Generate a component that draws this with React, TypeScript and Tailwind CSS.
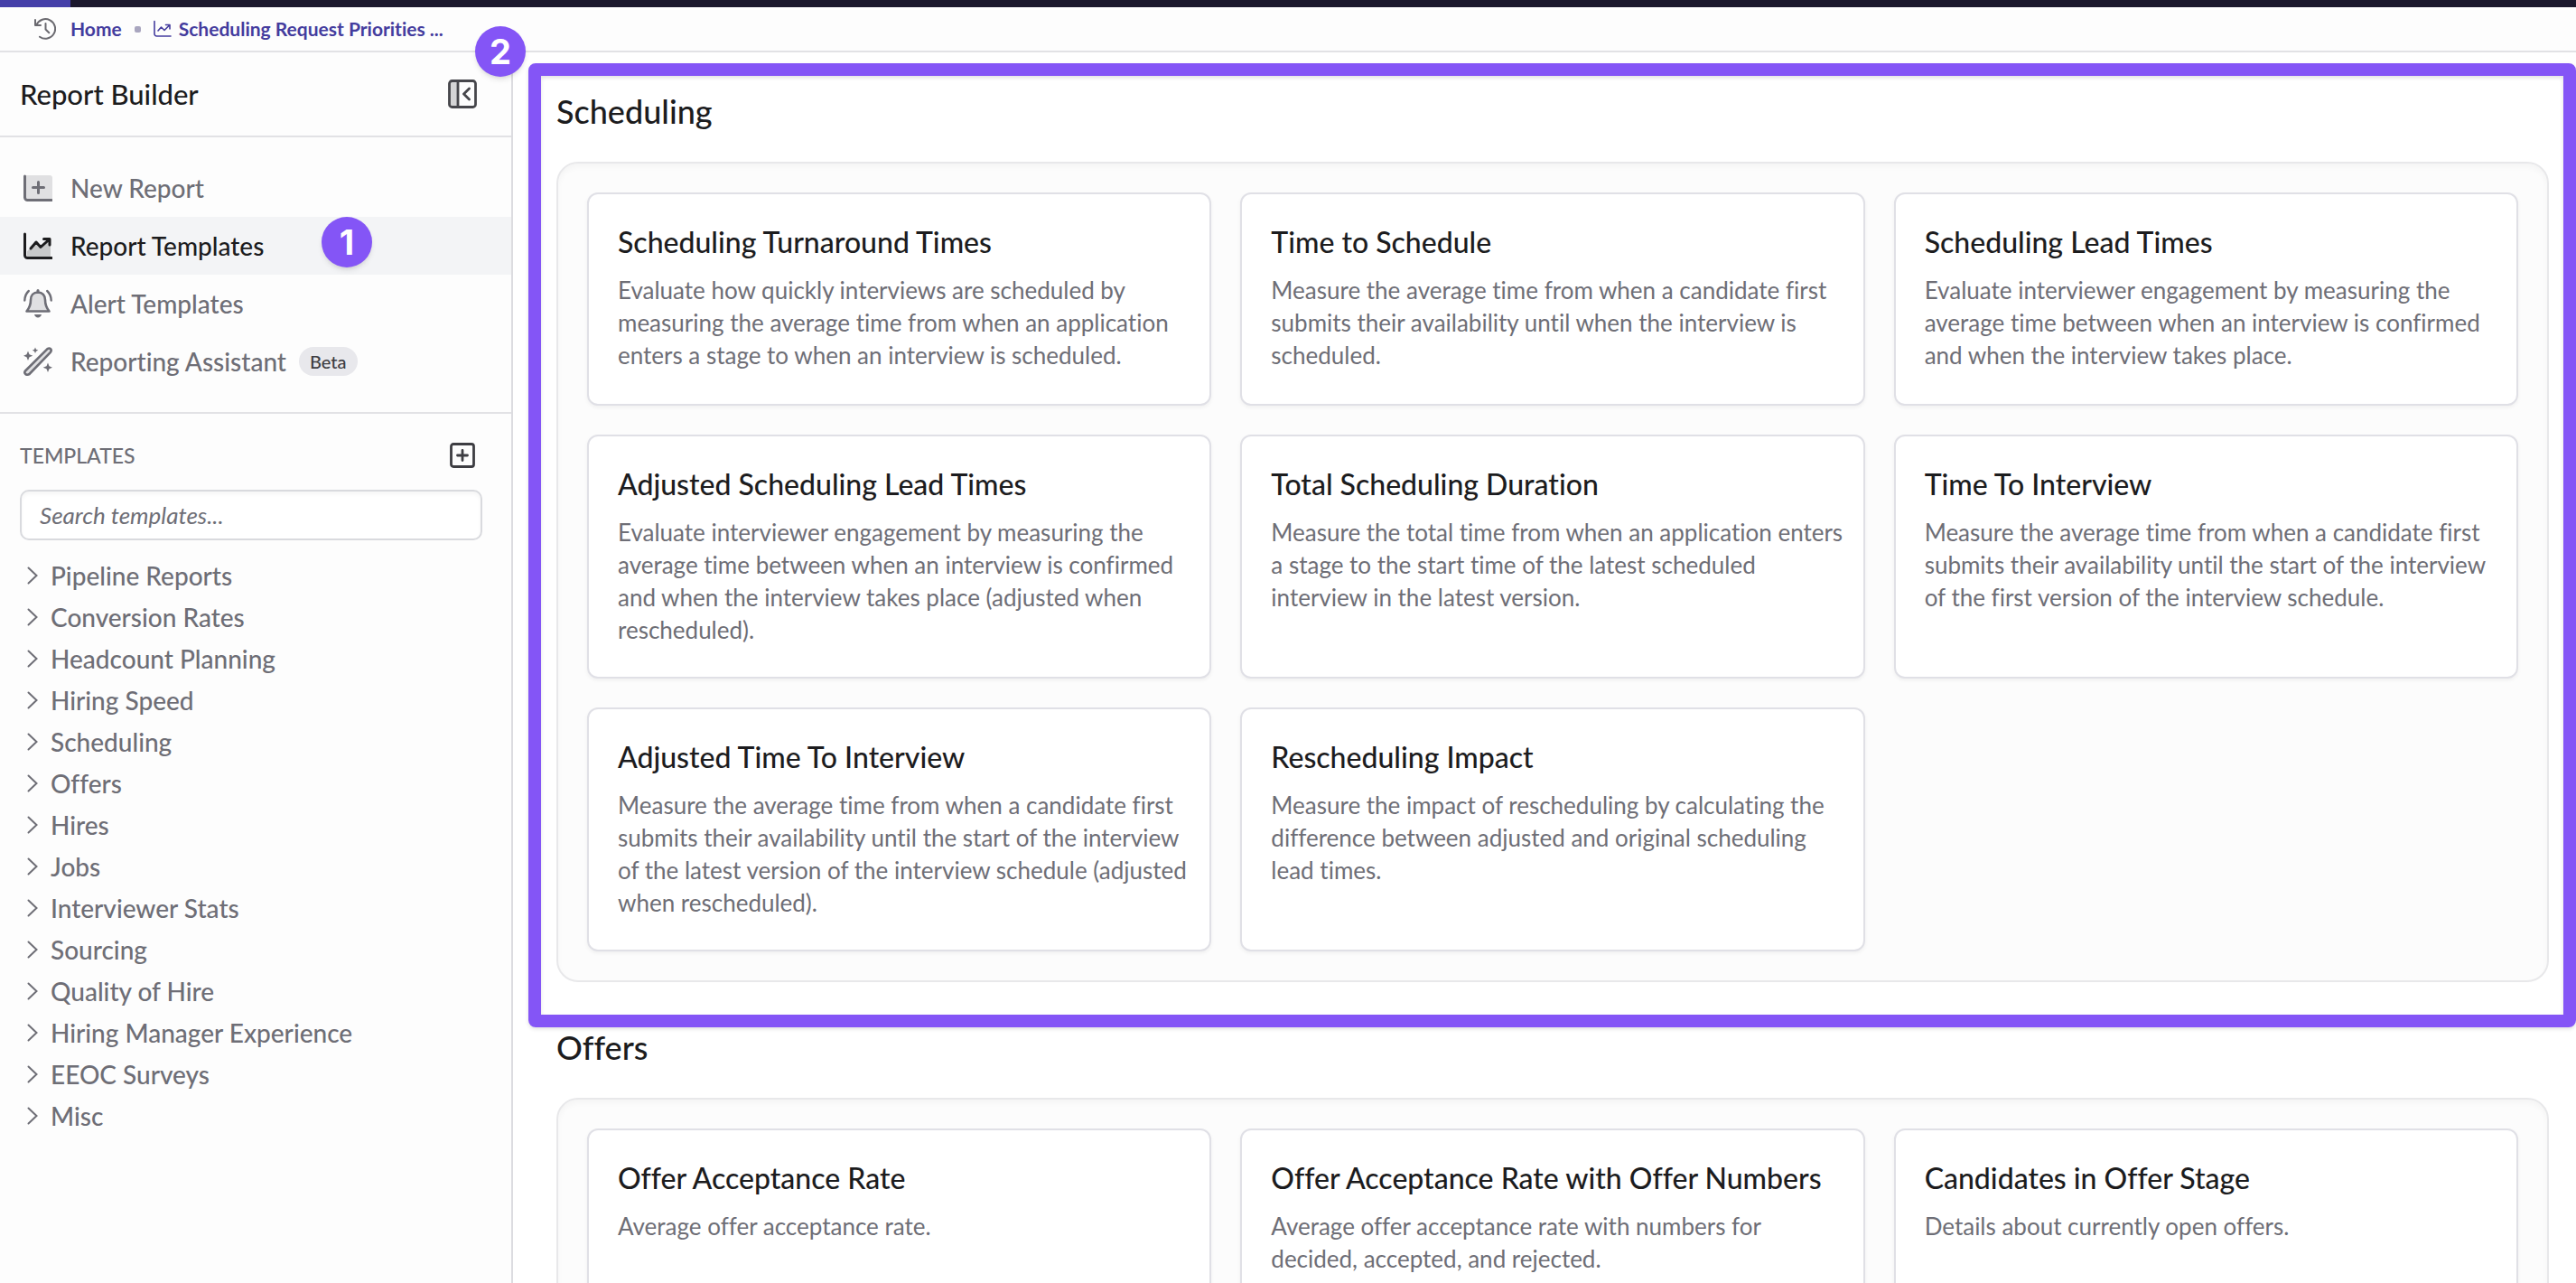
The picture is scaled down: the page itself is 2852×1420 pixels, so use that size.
import type { ReactNode } from 'react';
import clsx from 'clsx';

type Template = { title: string; description: string };

const schedulingTemplates: Template[] = [
  {
    title: 'Scheduling Turnaround Times',
    description:
      'Evaluate how quickly interviews are scheduled by measuring the average time from when an application enters a stage to when an interview is scheduled.',
  },
  {
    title: 'Time to Schedule',
    description:
      'Measure the average time from when a candidate first submits their availability until when the interview is scheduled.',
  },
  {
    title: 'Scheduling Lead Times',
    description:
      'Evaluate interviewer engagement by measuring the average time between when an interview is confirmed and when the interview takes place.',
  },
  {
    title: 'Adjusted Scheduling Lead Times',
    description:
      'Evaluate interviewer engagement by measuring the average time between when an interview is confirmed and when the interview takes place (adjusted when rescheduled).',
  },
  {
    title: 'Total Scheduling Duration',
    description:
      'Measure the total time from when an application enters a stage to the start time of the latest scheduled interview in the latest version.',
  },
  {
    title: 'Time To Interview',
    description:
      'Measure the average time from when a candidate first submits their availability until the start of the interview of the first version of the interview schedule.',
  },
  {
    title: 'Adjusted Time To Interview',
    description:
      'Measure the average time from when a candidate first submits their availability until the start of the interview of the latest version of the interview schedule (adjusted when rescheduled).',
  },
  {
    title: 'Rescheduling Impact',
    description:
      'Measure the impact of rescheduling by calculating the difference between adjusted and original scheduling lead times.',
  },
];

const offerTemplates: Template[] = [
  { title: 'Offer Acceptance Rate', description: 'Average offer acceptance rate.' },
  {
    title: 'Offer Acceptance Rate with Offer Numbers',
    description: 'Average offer acceptance rate with numbers for decided, accepted, and rejected.',
  },
  { title: 'Candidates in Offer Stage', description: 'Details about currently open offers.' },
];

const categories = [
  'Pipeline Reports',
  'Conversion Rates',
  'Headcount Planning',
  'Hiring Speed',
  'Scheduling',
  'Offers',
  'Hires',
  'Jobs',
  'Interviewer Stats',
  'Sourcing',
  'Quality of Hire',
  'Hiring Manager Experience',
  'EEOC Surveys',
  'Misc',
];

type IconProps = { className?: string };

function Icon({ className, box = 32, children }: IconProps & { box?: number; children: ReactNode }) {
  return (
    <svg
      viewBox={`0 0 ${box} ${box}`}
      className={clsx('shrink-0', className)}
      fill="none"
      stroke="currentColor"
      strokeLinecap="round"
      strokeLinejoin="round"
      aria-hidden="true"
    >
      {children}
    </svg>
  );
}

function HistoryIcon({ className }: IconProps) {
  return (
    <Icon className={className} box={24}>
      <path d="M1 2v6h6M2.4 7.6A10.8 10.8 0 1 1 6 20.7" strokeWidth="2" />
      <path d="M12.5 6v6.5l3.8 3.8" strokeWidth="2" />
    </Icon>
  );
}

function ChartOutlineIcon({ className }: IconProps) {
  return (
    <Icon className={className} box={20}>
      <path d="M1 1.5v14a2.5 2.5 0 0 0 2.5 2.5H19" strokeWidth="1.6" />
      <path d="M5 12l3.5-4 3.5 3.5L17.5 6M13.5 5.5h4.5V10" strokeWidth="1.6" />
    </Icon>
  );
}

function NewReportIcon({ className }: IconProps) {
  return (
    <Icon className={className}>
      <path d="M1 2h28a3 3 0 0 1 3 3v24H4a3 3 0 0 1-3-3z" fill="currentColor" opacity="0.2" stroke="none" />
      <path d="M1.5 3v23.5a3 3 0 0 0 3 3H31" strokeWidth="3" />
      <path d="M16.5 9.5v12M10.5 15.5h12" strokeWidth="3" />
    </Icon>
  );
}

function ChartIcon({ className }: IconProps) {
  return (
    <Icon className={className}>
      <path d="M4 22l10-9 5 5 11-9v19H4z" fill="currentColor" opacity="0.2" stroke="none" />
      <path d="M1.5 3v23.5a3 3 0 0 0 3 3H31" strokeWidth="3" />
      <path d="M8 19l6-7 5 5.5L28.5 9M22.5 8.5H29V15" strokeWidth="3" />
    </Icon>
  );
}

function BellIcon({ className }: IconProps) {
  return (
    <Icon className={className}>
      <path
        d="M16 3.5c-5 0-8 3.5-8 8.5 0 6-1.5 9-4.5 12.5h25C25.5 21 24 18 24 12c0-5-3-8.5-8-8.5z"
        fill="currentColor"
        fillOpacity="0.2"
        strokeWidth="2.6"
      />
      <path d="M16 1.5v2" strokeWidth="3" />
      <path d="M12 28h8c-.6 2-2 3.6-4 3.6S12.6 30 12 28z" fill="currentColor" stroke="none" />
      <path d="M5.8 2C3 4.5 1.5 8 1.3 12.5M26.2 2c2.8 2.5 4.3 6 4.5 10.5" strokeWidth="2.4" />
    </Icon>
  );
}

function WandIcon({ className }: IconProps) {
  return (
    <Icon className={className}>
      <path
        d="M2 26.5L26.5 2.2c2.8-1.8 5.4.8 3.4 3.6L6.5 30c-3.6 2-6.4-.8-4.5-3.5z"
        fill="currentColor"
        fillOpacity="0.2"
        strokeWidth="2.6"
      />
      <path
        d="M5 4.5l1.5 3.8 3.8 1.5-3.8 1.5L5 15l-1.5-3.7L0 9.8l3.5-1.5zM13 .5l1 2.2 2.3 1-2.3 1-1 2.3-1-2.3-2.2-1 2.2-1zM27 17.5l1.5 3.8 3.5 1.5-3.5 1.5L27 28l-1.5-3.7-3.8-1.5 3.8-1.5z"
        fill="currentColor"
        stroke="none"
      />
    </Icon>
  );
}

function CollapseIcon({ className }: IconProps) {
  return (
    <Icon className={className}>
      <path d="M1.5 5A3.5 3.5 0 0 1 5 1.5h6v29H5A3.5 3.5 0 0 1 1.5 27z" fill="currentColor" opacity="0.22" stroke="none" />
      <rect x="1.5" y="1.5" width="29" height="29" rx="3" strokeWidth="2.8" />
      <path d="M11 2v28M23.5 10l-6 6 6 6" strokeWidth="2.8" />
    </Icon>
  );
}

function AddSquareIcon({ className }: IconProps) {
  return (
    <Icon className={className} box={28}>
      <rect x="1.5" y="1.5" width="25" height="25" rx="2.5" strokeWidth="2.8" />
      <path d="M14 8.5v11M8.5 14h11" strokeWidth="2.8" />
    </Icon>
  );
}

function ChevronIcon({ className }: IconProps) {
  return (
    <svg viewBox="0 0 12 20" className={clsx('shrink-0', className)} fill="none" stroke="currentColor" aria-hidden="true">
      <path d="M1.5 1.5L10.5 10l-9 8.5" strokeWidth="2" strokeLinecap="round" />
    </svg>
  );
}

const navItems = [
  { label: 'New Report', icon: NewReportIcon },
  { label: 'Report Templates', icon: ChartIcon, active: true, step: 1 },
  { label: 'Alert Templates', icon: BellIcon },
  { label: 'Reporting Assistant', icon: WandIcon, tag: 'Beta' },
];

function StepBadge({ step, className }: { step: number; className: string }) {
  return (
    <span
      className={clsx(
        'absolute z-20 flex size-14 items-center justify-center rounded-full bg-[#8455f6] font-[Inter,sans-serif] text-[38px] leading-none font-bold text-white shadow-md',
        className,
      )}
    >
      {step}
    </span>
  );
}

function Sidebar() {
  return (
    <aside className="w-[568px] shrink-0 border-r-2 border-[#dcdce0] bg-[#fdfdfd]">
      <div className="flex h-[94px] items-center justify-between border-b-2 border-[#e2e2e5] pr-[38px] pl-[22px]">
        <h1 className="text-[31px] font-medium text-[#1c1c1e]">Report Builder</h1>
        <button type="button" aria-label="Collapse sidebar" className="text-[#46464b]">
          <CollapseIcon className="size-8" />
        </button>
      </div>

      <nav className="border-b-2 border-[#e2e2e5] py-6">
        {navItems.map((item) => (
          <a
            key={item.label}
            href="#"
            className={clsx(
              'relative flex h-16 items-center pl-[26px] text-[28px] font-medium',
              item.active ? 'bg-[#f3f4f6] text-[#1c1c1e]' : 'text-[#6e6e76]',
            )}
          >
            <item.icon className="mr-5 size-8" />
            {item.label}
            {item.tag && (
              <span className="ml-3.5 flex h-8 items-center rounded-full bg-[#e8e8ec] px-3 text-[20px] text-[#3d3d42]">
                {item.tag}
              </span>
            )}
            {item.step && <StepBadge step={item.step} className="top-0 left-[356px]" />}
          </a>
        ))}
      </nav>

      <div className="pt-7 pr-8 pl-[22px]">
        <div className="flex h-9 items-center justify-between pr-2">
          <h2 className="text-[23px] font-medium text-[#6e6e76]">TEMPLATES</h2>
          <button type="button" aria-label="Add template" className="text-[#3d3d42]">
            <AddSquareIcon className="size-7" />
          </button>
        </div>
        <input
          type="search"
          aria-label="Search templates"
          placeholder="Search templates..."
          className="mt-5 h-14 w-full rounded-[10px] border-2 border-[#d9dade] bg-white px-5 text-[26px] shadow-[inset_0_3px_4px_rgba(0,0,0,0.04)] placeholder:text-[#6e6e76] placeholder:italic"
        />
        <ul className="mt-4">
          {categories.map((category) => (
            <li key={category}>
              <button type="button" className="flex h-[46px] w-full items-center gap-3.5 pl-2 text-[28px] font-medium text-[#6e6e76]">
                <ChevronIcon className="h-5 w-3" />
                {category}
              </button>
            </li>
          ))}
        </ul>
      </div>
    </aside>
  );
}

function TemplateSection({ title, templates, highlighted }: { title: string; templates: Template[]; highlighted?: boolean }) {
  return (
    <section className="relative mb-[50px]">
      <h2 className="mb-[34px] text-[36px] leading-[44px] font-medium text-[#1c1c1e]">{title}</h2>
      <div className="grid grid-cols-3 gap-8 rounded-3xl border-2 border-[#e8e8ea] bg-[#fcfcfc] p-8 shadow-[inset_0_4px_6px_rgba(0,0,0,0.03)]">
        {templates.map((template) => (
          <a
            key={template.title}
            href="#"
            className="min-h-[236px] rounded-xl border-2 border-[#e0e0e6] bg-white pt-8 pr-4 pb-[34px] pl-8 shadow-[0_2px_4px_rgba(0,0,0,0.05)]"
          >
            <h3 className="text-[32px] leading-[42px] font-medium text-[#1c1c1e]">{template.title}</h3>
            <p className="mt-3.5 text-[26px] leading-9 text-[#6e6e76]">{template.description}</p>
          </a>
        ))}
      </div>
      {highlighted && (
        <div className="pointer-events-none absolute -top-[31px] -right-[30px] -bottom-[50px] -left-[31px] z-10 rounded-lg border-14 border-[#8455f6] shadow-[0_2px_4px_rgba(0,0,0,0.12),inset_0_2px_4px_rgba(0,0,0,0.12)]" />
      )}
    </section>
  );
}

export default function App() {
  return (
    <div className="relative flex h-screen flex-col overflow-hidden bg-white font-[Lato,sans-serif] [font-variant-ligatures:none]">
      <div className="h-2 shrink-0 bg-[#1b182d]">
        <div className="h-full w-[78px] bg-[#443fa8]" />
      </div>

      <nav
        aria-label="Breadcrumb"
        className="flex h-[50px] shrink-0 items-center border-b-2 border-[#e2e2e5] bg-[#fdfdfd] pl-[38px] text-[21px] font-bold text-[#443c9e]"
      >
        <HistoryIcon className="mr-4 size-6 text-[#6b6a70]" />
        <a href="#">Home</a>
        <span className="mx-3.5 size-[7px] rounded-xs bg-[#a9a6bf]" />
        <a href="#" className="flex items-center gap-2">
          <ChartOutlineIcon className="size-5" />
          Scheduling Request Priorities ...
        </a>
      </nav>

      <div className="flex min-h-0 flex-1">
        <Sidebar />
        <main className="min-w-0 flex-1 overflow-hidden pt-[43px] pr-[30px] pl-12">
          <TemplateSection title="Scheduling" templates={schedulingTemplates} highlighted />
          <TemplateSection title="Offers" templates={offerTemplates} />
        </main>
      </div>

      <StepBadge step={2} className="top-[29px] left-[526px]" />
    </div>
  );
}
